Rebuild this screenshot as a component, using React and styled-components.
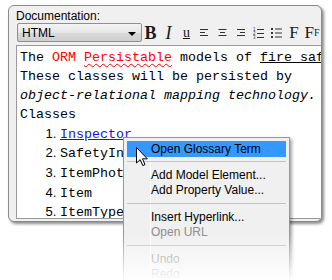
import React from "react";
import styled, { createGlobalStyle } from "styled-components";

const Global = createGlobalStyle`
  html, body { margin: 0; padding: 0; background: #fff; }
  * { box-sizing: border-box; }
`;

const Page = styled.div`
  position: relative;
  width: 332px;
  height: 280px;
  overflow: hidden;
  background: #fff;
  padding: 5px 10px 0 8px;
`;

const Panel = styled.div`
  height: 217px;
  border: 1px solid #8a8a8a;
  border-radius: 6px;
  background: #f0f0f0;
  box-shadow: 2px 2px 3px rgba(0, 0, 0, 0.45);
  overflow: hidden;
  padding: 3px 0 0 7px;
  display: flex;
  flex-direction: column;
`;

const Label = styled.div`
  font-family: "Liberation Sans", Arial, sans-serif;
  font-size: 12px;
  line-height: 14px;
  color: #000;
`;

const Toolbar = styled.div`
  display: flex;
  align-items: center;
  height: 19px;
  padding-left: 1px;
`;

const Select = styled.div`
  width: 125px;
  height: 19px;
  border: 1px solid #8e8f8f;
  border-radius: 2px;
  background: linear-gradient(#f4f4f4, #e6e6e6 50%, #d9d9d9 51%, #cfcfcf);
  display: flex;
  align-items: center;
  justify-content: space-between;
  padding: 0 5px 0 4px;
  font-family: "Liberation Sans", Arial, sans-serif;
  font-size: 12px;
  color: #000;
`;

const Arrow = styled.span`
  width: 0;
  height: 0;
  border-left: 4px solid transparent;
  border-right: 4px solid transparent;
  border-top: 4px solid #000;
  margin-top: 2px;
`;

const Tool = styled.div`
  width: 18px;
  height: 19px;
  display: flex;
  align-items: center;
  justify-content: center;
  font-family: "Liberation Serif", "Times New Roman", serif;
  font-size: ${(p) => p.$size || 18}px;
  font-weight: ${(p) => (p.$bold ? 700 : 400)};
  font-style: ${(p) => (p.$italic ? "italic" : "normal")};
  text-decoration: ${(p) => (p.$under ? "underline" : "none")};
  color: #1a1a1a;
  line-height: 1;
`;

const Sub = styled.span`
  font-size: 10px;
  align-self: flex-end;
  margin-bottom: 4px;
`;

const Editor = styled.div`
  flex: 1;
  margin: 3px -24px 2px 0;
  border: 1px solid #9a9a9a;
  background: #fff;
  overflow: hidden;
  padding: 3px 3px;
  font-family: "Liberation Mono", "Courier New", monospace;
  font-size: 13.33px;
  line-height: 18.9px;
  color: #000;
  white-space: nowrap;
`;

const Line = styled.div``;

const Red = styled.span`
  color: #f00;
  text-decoration: ${(p) => (p.$wavy ? "underline wavy #f00" : "none")};
  text-decoration-thickness: 1px;
  text-underline-offset: 2px;
`;

const Under = styled.span`
  text-decoration: underline;
`;

const Ital = styled.div`
  font-style: italic;
`;

const List = styled.ol`
  margin: 0;
  padding-left: 40px;
  li {
    line-height: 18.7px;
  }
  li::marker {
    font-family: "Liberation Sans", Arial, sans-serif;
    font-size: 13px;
  }
`;

const LinkText = styled.span`
  color: #1515d8;
  text-decoration: underline;
`;

const Menu = styled.div`
  position: absolute;
  left: 123px;
  top: 137px;
  width: 167px;
  height: 160px;
  border: 1px solid #979797;
  background: #f0f0f0;
  box-shadow: 2px 2px 3px rgba(0, 0, 0, 0.35);
  padding: 3px 3px;
  font-family: "Liberation Sans", Arial, sans-serif;
  font-size: 12px;
  &::before {
    content: "";
    position: absolute;
    left: 26px;
    top: 3px;
    bottom: 0;
    width: 1px;
    background: #fcfcfc;
  }
`;

const Item = styled.div`
  position: relative;
  height: ${(p) => (p.$active ? 16 : 15)}px;
  line-height: ${(p) => (p.$active ? 16 : 15)}px;
  padding-left: 24px;
  color: ${(p) => (p.$disabled ? "#8d8d8d" : "#000")};
  background: ${(p) => (p.$active ? "#3399ff" : "transparent")};
`;

const Sep = styled.div`
  position: relative;
  height: 1px;
  margin: ${(p) => (p.$tight ? 4 : 5)}px 0 6px;
  background: #c3c3c3;
`;

const Fade = styled.div`
  position: absolute;
  left: 0;
  right: 0;
  top: 234px;
  bottom: 0;
  background: linear-gradient(rgba(255, 255, 255, 0), rgba(255, 255, 255, 0.97));
  pointer-events: none;
`;

const Cursor = styled.svg`
  position: absolute;
  left: 136px;
  top: 147px;
`;

const AlignIcon = ({ mode }) => {
  const rows = [8, 5, 8];
  return (
    <svg width="9" height="8" viewBox="0 0 9 8">
      {rows.map((w, i) => {
        const x = mode === "left" ? 0 : mode === "right" ? 9 - w : (9 - w) / 2;
        return <rect key={i} x={x} y={i * 3} width={w} height="1" fill="#333" />;
      })}
    </svg>
  );
};

const OrderedIcon = () => (
  <svg width="11" height="12" viewBox="0 0 11 12">
    <text x="0" y="4" fontSize="4.5" fontFamily="Liberation Sans, sans-serif" fill="#333">1</text>
    <text x="0" y="8" fontSize="4.5" fontFamily="Liberation Sans, sans-serif" fill="#333">2</text>
    <text x="0" y="12" fontSize="4.5" fontFamily="Liberation Sans, sans-serif" fill="#333">3</text>
    <rect x="4" y="2" width="7" height="1" fill="#333" />
    <rect x="4" y="6" width="7" height="1" fill="#333" />
    <rect x="4" y="10" width="7" height="1" fill="#333" />
  </svg>
);

const BulletIcon = () => (
  <svg width="11" height="10" viewBox="0 0 11 10">
    {[0, 4, 8].map((y) => (
      <g key={y}>
        <rect x="0" y={y} width="2" height="2" fill="#333" />
        <rect x="4" y={y + 0.5} width="7" height="1" fill="#333" />
      </g>
    ))}
  </svg>
);

export default function App() {
  return (
    <>
      <Global />
      <Page>
        <Panel>
          <Label>Documentation:</Label>
          <Toolbar>
            <Select>
              HTML
              <Arrow />
            </Select>
            <Tool $bold>B</Tool>
            <Tool $italic>I</Tool>
            <Tool $under $size={14}>u</Tool>
            <Tool><AlignIcon mode="left" /></Tool>
            <Tool><AlignIcon mode="center" /></Tool>
            <Tool><AlignIcon mode="right" /></Tool>
            <Tool><OrderedIcon /></Tool>
            <Tool><BulletIcon /></Tool>
            <Tool $size={17}>F</Tool>
            <Tool $size={17}>F<Sub>F</Sub></Tool>
          </Toolbar>
          <Editor>
            <Line>
              The <Red>ORM</Red> <Red $wavy>Persistable</Red> models of <Under>fire safety</Under>
            </Line>
            <Line>These classes will be persisted by</Line>
            <Ital>object-relational mapping technology.</Ital>
            <Line>Classes</Line>
            <List>
              <li><LinkText>Inspector</LinkText></li>
              <li>SafetyInspection</li>
              <li>ItemPhoto</li>
              <li>Item</li>
              <li>ItemType</li>
              <li>Location</li>
            </List>
          </Editor>
        </Panel>
        <Menu>
          <Item $active>Open Glossary Term</Item>
          <Sep $tight />
          <Item>Add Model Element...</Item>
          <Item>Add Property Value...</Item>
          <Sep />
          <Item>Insert Hyperlink...</Item>
          <Item $disabled>Open URL</Item>
          <Sep />
          <Item $disabled>Undo</Item>
          <Item $disabled>Redo</Item>
        </Menu>
        <Cursor width="13" height="20" viewBox="0 0 13 20">
          <path
            d="M0.5 0.5 L0.5 16 L4.2 12.6 L6.8 18.6 L9 17.6 L6.5 11.8 L11.3 11.8 Z"
            fill="#fff"
            stroke="#000"
            strokeWidth="1"
            strokeLinejoin="miter"
          />
        </Cursor>
        <Fade />
      </Page>
    </>
  );
}
